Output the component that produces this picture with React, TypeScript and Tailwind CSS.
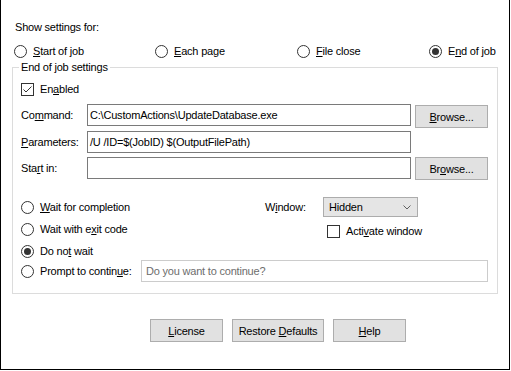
import React from 'react';

const Radio: React.FC<{ checked?: boolean }> = ({ checked }) => (
  <span className="w-[13px] h-[13px] rounded-full border border-[#333333] bg-white flex items-center justify-center shrink-0">
    {checked && <span className="w-[7px] h-[7px] rounded-full bg-[#333333]" />}
  </span>
);

const Check: React.FC<{ checked?: boolean }> = ({ checked }) => (
  <span className="w-[13px] h-[13px] border border-[#333333] bg-white flex items-center justify-center shrink-0">
    {checked && (
      <svg width="11" height="11" viewBox="0 0 11 11">
        <polyline points="1.5,5.5 4,8 9.5,2.5" fill="none" stroke="#333333" strokeWidth="1" />
      </svg>
    )}
  </span>
);

const Button: React.FC<{ className: string; children: React.ReactNode }> = ({ className, children }) => (
  <div className={`h-[23px] bg-[#e1e1e1] border border-[#adadad] flex items-center justify-center shrink-0 ${className}`}>
    {children}
  </div>
);

const TextBox: React.FC<{ children?: React.ReactNode }> = ({ children }) => (
  <div className="w-[324px] h-[22px] border border-[#7a7a7a] bg-white flex items-center px-[2px] shrink-0">
    {children}
  </div>
);

export default function App() {
  return (
    <div className="w-[510px] h-[370px] border-x border-b border-black bg-white flex flex-col font-['Liberation_Sans',Arial,sans-serif] text-[11px] leading-[14px] tracking-[-0.2px] text-black">
      <div className="pt-[20px] pl-[14px]">Show settings for:</div>

      <div className="mt-[10px] pl-[13px] flex h-[14px]">
        <div className="w-[141px] flex items-center gap-[6px]">
          <Radio />
          <span><u>S</u>tart of job</span>
        </div>
        <div className="w-[142px] flex items-center gap-[6px]">
          <Radio />
          <span><u>E</u>ach page</span>
        </div>
        <div className="w-[132px] flex items-center gap-[6px]">
          <Radio />
          <span><u>F</u>ile close</span>
        </div>
        <div className="flex items-center gap-[6px]">
          <Radio checked />
          <span>E<u>n</u>d of job</span>
        </div>
      </div>

      <fieldset className="mt-[2px] ml-[11px] w-[486px] border border-[#dcdcdc] px-[8px] pb-[11px]">
        <legend className="ml-[-2px] px-[2px]">End of job settings</legend>

        <div className="mt-[8px] h-[14px] flex items-center gap-[6px]">
          <Check checked />
          <span>En<u>a</u>bled</span>
        </div>

        <div className="mt-[8px] flex items-start">
          <div className="w-[66px] h-[22px] flex items-center">Co<u>m</u>mand:</div>
          <TextBox>C:\CustomActions\UpdateDatabase.exe</TextBox>
          <Button className="ml-[4px] mt-[1px] w-[73px]">
            <span><u>B</u>rowse...</span>
          </Button>
        </div>

        <div className="mt-[3px] flex items-start">
          <div className="w-[66px] h-[22px] flex items-center"><u>P</u>arameters:</div>
          <TextBox>/U /ID=$(JobID) $(OutputFilePath)</TextBox>
        </div>

        <div className="mt-[4px] flex items-start">
          <div className="w-[66px] h-[22px] flex items-center">Sta<u>r</u>t in:</div>
          <TextBox />
          <Button className="ml-[4px] w-[73px]">
            <span>Br<u>o</u>wse...</span>
          </Button>
        </div>

        <div className="mt-[17px] h-[20px] flex items-center">
          <div className="w-[244px] flex items-center gap-[6px]">
            <Radio />
            <span><u>W</u>ait for completion</span>
          </div>
          <div className="w-[58px]">W<u>i</u>ndow:</div>
          <div className="w-[95px] h-[20px] bg-[#e5e5e5] border border-[#acacac] flex items-center justify-between pl-[5px] pr-[6px]">
            <span>Hidden</span>
            <svg width="8" height="5" viewBox="0 0 8 5">
              <polyline points="0.5,0.5 4,4 7.5,0.5" fill="none" stroke="#606060" strokeWidth="1" />
            </svg>
          </div>
        </div>

        <div className="mt-[3px] h-[18px] flex items-start">
          <div className="w-[244px] h-[18px] flex items-center gap-[6px]">
            <Radio />
            <span>Wait with e<u>x</u>it code</span>
          </div>
          <div className="ml-[62px] h-[18px] mt-[2px] flex items-center gap-[6px]">
            <Check />
            <span>Acti<u>v</u>ate window</span>
          </div>
        </div>

        <div className="mt-[4px] h-[18px] flex items-center gap-[6px]">
          <Radio checked />
          <span>Do no<u>t</u> wait</span>
        </div>

        <div className="h-[22px] flex items-center">
          <div className="w-[120px] flex items-center gap-[6px]">
            <Radio />
            <span>Prompt to contin<u>u</u>e:</span>
          </div>
          <div className="w-[347px] h-[22px] border border-[#cccccc] bg-white flex items-center px-[4px] text-[#6d6d6d]">
            Do you want to continue?
          </div>
        </div>
      </fieldset>

      <div className="mt-[25px] pl-[149px] flex gap-[9px]">
        <Button className="w-[73px]">
          <span><u>L</u>icense</span>
        </Button>
        <Button className="w-[92px]">
          <span>Restore <u>D</u>efaults</span>
        </Button>
        <Button className="w-[73px]">
          <span><u>H</u>elp</span>
        </Button>
      </div>
    </div>
  );
}
